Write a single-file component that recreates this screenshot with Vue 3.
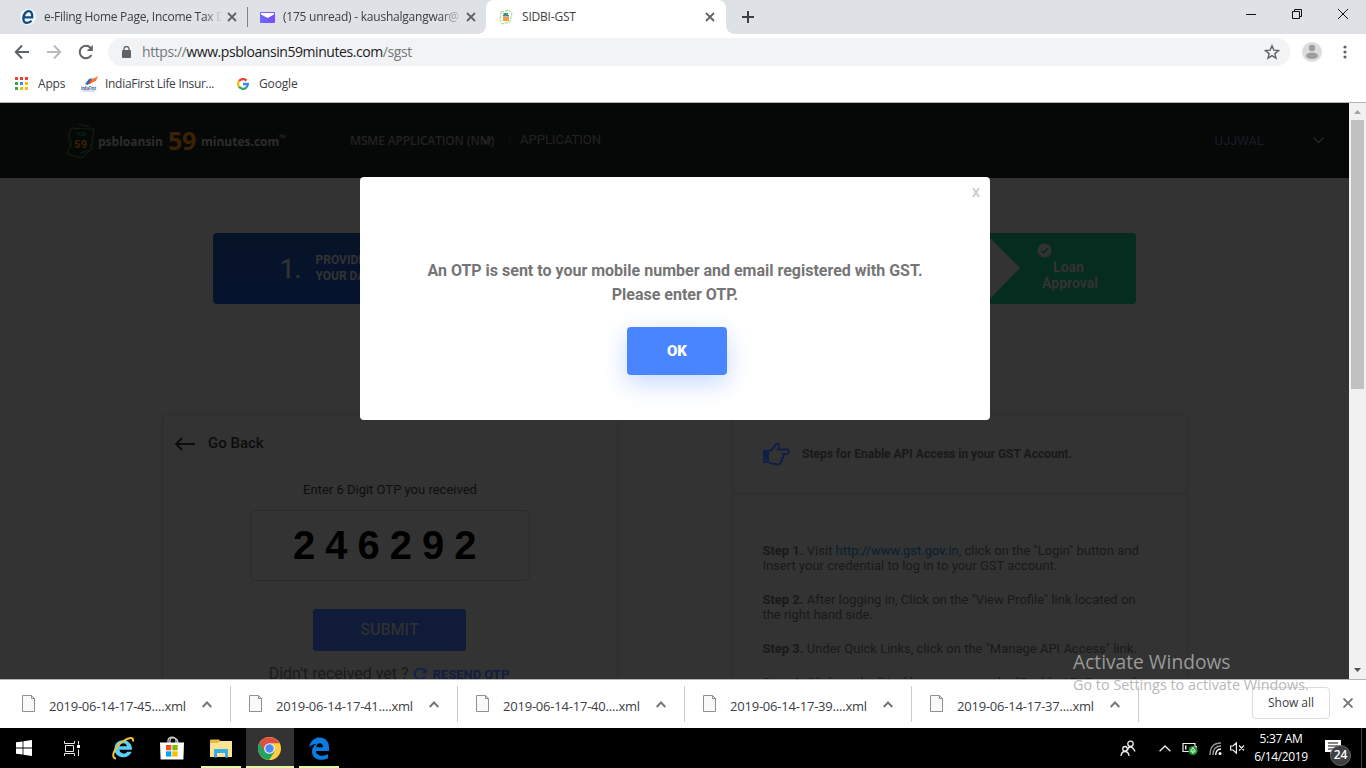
<script setup>
const downloads = [
  '2019-06-14-17-45....xml',
  '2019-06-14-17-41....xml',
  '2019-06-14-17-40....xml',
  '2019-06-14-17-39....xml',
  '2019-06-14-17-37....xml',
]
const appDots = ['#ea4335', '#ea4335', '#ea4335', '#34a853', '#4285f4', '#fbbc05', '#34a853', '#fbbc05', '#fbbc05']
</script>

<template>
  <div class="screen">
    <!-- Tab strip -->
    <div class="tabs">
      <div class="tab first">
        <svg class="fav" width="16" height="16" viewBox="0 0 16 16"><circle cx="8" cy="8" r="8" fill="#f4f7fa" /><path d="M3.300 8.400H12.200C12.600 1.500 8.600 1.200 6.200 3.200 2.400 6.400 2.200 13.800 7 13.800c2 0 3.400-.8 4.600-2" fill="none" stroke="#0b4f86" stroke-width="2.300" /></svg>
        <span class="title t1">e-Filing Home Page, Income Tax D</span>
        <svg class="x" width="10" height="10" viewBox="0 0 10 10"><path d="M1 1l8 8M9 1L1 9" /></svg>
      </div>
      <div class="tab second">
        <svg class="fav mail" width="15" height="11" viewBox="0 0 15 11"><defs><linearGradient id="mg"><stop offset="0" stop-color="#6b6bff" /><stop offset="1" stop-color="#7a4dff" /></linearGradient></defs><rect width="15" height="11" rx="1" fill="url(#mg)" /><path d="M1 1h13v1.500L7.500 6 1 2.500z" fill="#fff" /></svg>
        <span class="title t2">(175 unread) - kaushalgangwar@</span>
        <svg class="x" width="10" height="10" viewBox="0 0 10 10"><path d="M1 1l8 8M9 1L1 9" /></svg>
      </div>
      <div class="tab active">
        <svg class="fav" width="16" height="16" viewBox="0 0 16 16"><path d="M3 3l8-2 3 3-2 9-8 2-2-4z" fill="#f6faf2" stroke="#a5cf8c" stroke-dasharray="3 1" /><path d="M5.500 4h4.500v2H5.500z" fill="#3da05c" /><path d="M5 6h6v1.500H5z" fill="#5577c8" /><path d="M5 8h6v4H5z" fill="#f5a13a" /></svg>
        <span class="title t3">SIDBI-GST</span>
        <svg class="x" width="10" height="10" viewBox="0 0 10 10"><path d="M1 1l8 8M9 1L1 9" /></svg>
      </div>
      <svg class="plus" width="12" height="12" viewBox="0 0 12 12"><path d="M6 0v12M0 6h12" stroke="#3c4043" stroke-width="2" /></svg>
      <div class="winctl">
        <svg width="10" height="10" viewBox="0 0 10 10"><path d="M0 5.500h10" /></svg>
        <svg width="10" height="10" viewBox="0 0 10 10"><path d="M.5 2.500h7v7h-7zM2.500 2.500v-2h7v7h-2" /></svg>
        <svg width="10" height="10" viewBox="0 0 10 10"><path d="M0 0l10 10M10 0L0 10" /></svg>
      </div>
    </div>

    <!-- Address bar -->
    <div class="toolbar">
      <svg class="nav" width="16" height="16" viewBox="0 0 16 16"><path d="M15 8H2.500M8 1.500L1.800 8 8 14.500" stroke="#5f6368" /></svg>
      <svg class="nav" width="16" height="16" viewBox="0 0 16 16"><path d="M1 8h12.500M8 1.500L14.200 8 8 14.500" stroke="#b8babd" /></svg>
      <svg class="nav" width="16" height="16" viewBox="0 0 16 16"><path d="M13.400 11A6.200 6.200 0 1 1 12.500 3.800L14 5.300" stroke="#5f6368" /><path d="M14.800 1v6h-6z" fill="#5f6368" stroke="none" /></svg>
      <div class="omni">
        <svg width="9" height="12" viewBox="0 0 9 12"><rect y="4" width="9" height="8" rx="1" fill="#5f6368" /><path d="M2 5V3a2.500 2.500 0 0 1 5 0v2" fill="none" stroke="#5f6368" stroke-width="1.300" /></svg>
        <span class="url"><i>https://</i>www.psbloansin59minutes.com<i>/sgst</i></span>
        <svg class="star" width="16" height="16" viewBox="0 0 16 16"><path d="M8 1.700l1.800 4.400 4.700.4-3.600 3.100 1.100 4.600L8 11.700l-4 2.500 1.100-4.600L1.500 6.500l4.700-.4z" fill="none" stroke="#5f6368" stroke-width="1.400" /></svg>
      </div>
      <svg class="user" width="20" height="20" viewBox="0 0 20 20"><circle cx="10" cy="10" r="10" fill="#dcdcdc" /><circle cx="10" cy="6" r="3.200" fill="#9e9e9e" /><ellipse cx="10" cy="13.700" rx="6" ry="3.200" fill="#9e9e9e" /></svg>
      <svg class="menu" width="4" height="14" viewBox="0 0 4 14"><circle cx="2" cy="2" r="1.600" /><circle cx="2" cy="7" r="1.600" /><circle cx="2" cy="12" r="1.600" /></svg>
    </div>

    <div class="bookmarks">
      <div class="grid9"><b v-for="(c, i) in appDots" :key="i" :style="{ background: c }"></b></div>
      <span class="b1">Apps</span>
      <svg class="india" width="17" height="16" viewBox="0 0 17 16"><path d="M4 8l4-5 3-1-4 7z" fill="#1a73c4" /><path d="M6 8l5-5 2-1-4 6z" fill="#d92f3a" /><path d="M8 8l4-5 5-3-2 5z" fill="#f47b29" /><text x="0" y="13.500" font-size="5.500" font-weight="bold" textLength="15" lengthAdjust="spacingAndGlyphs" fill="#1d4e86">IndiaFirst</text><path d="M1 15h13" stroke="#9db4cf" stroke-width=".8" /></svg>
      <span class="b2">IndiaFirst Life Insur...</span>
      <svg class="goog" width="12" height="12" viewBox="0 0 12 12" fill="none" stroke-width="2.300"><path d="M2 3.200A4.850 4.850 0 0 1 9.500 2.600" stroke="#ea4335" /><path d="M2 8.700A4.850 4.850 0 0 1 2 3.200" stroke="#fbbc05" /><path d="M9.300 9.600A4.850 4.850 0 0 1 2 8.700" stroke="#34a853" /><path d="M6 6h4.850A4.850 4.850 0 0 1 9.200 9.600" stroke="#4285f4" /></svg>
      <span class="b3">Google</span>
    </div>

    <!-- Web page -->
    <div class="viewport">
      <div class="page">
        <header class="site">
          <svg class="logo" width="30" height="36" viewBox="0 0 30 36"><path d="M4 5l9 1M12 1l12 3M6 5l17 1 5 0-3 20-9 9-15-4 4-10M5 5L3 14 6 22" fill="none" stroke="#111d0e" stroke-width="1.200" /><path d="M1 8l2 7-1 5 3 3M26 15l2 3-4 4 3 3-4 4" fill="none" stroke="#1a1d0b" stroke-dasharray="2 1.500" /><text x="11" y="13" font-size="5" font-weight="bold" fill="#06260f">PSB</text><text x="8" y="25" font-size="11" font-weight="bold" textLength="13" fill="#3b2204">59</text><path d="M14 30l7-2" stroke="#06200f" stroke-width="1.500" /></svg>
          <span class="brand">psbloansin</span><span class="b59">59</span><span class="brand m">minutes.com</span><span class="tm">™</span>
          <div class="msme"><span>MSME APPLICATION (NM)</span><svg width="12" height="7" viewBox="0 0 12 7"><path d="M1 1l5 5 5-5" /></svg></div>
          <span class="app">APPLICATION</span>
          <span class="name">UJJWAL</span>
          <svg class="chev" width="11" height="7" viewBox="0 0 11 7"><path d="M.5.5l5 5 5-5" /></svg>
        </header>

        <div class="steps">
          <div class="one"><span class="num">1.</span><span class="lbl">PROVIDE<br />YOUR DATA</span></div>
          <div class="last">
            <svg class="badge" width="15" height="15" viewBox="0 0 15 15"><circle cx="7.500" cy="7.500" r="6.500" fill="#333" stroke="#333" stroke-width="1.500" stroke-dasharray="2 1" /><path d="M4.300 7.500l2.300 2.300 4.200-4.400" fill="none" stroke="#062b1f" stroke-width="1.800" /></svg>
            <span class="la">Loan</span><span>Approval</span>
          </div>
        </div>

        <div class="cards">
          <section class="card otp">
            <div class="back"><svg width="20" height="14" viewBox="0 0 20 14"><path d="M20 7H1.500M7 1L1 7l6 6" fill="none" stroke="#0c0c0c" stroke-width="1.900" /></svg>Go Back</div>
            <div class="prompt">Enter 6 Digit OTP you received</div>
            <div class="digits">246292</div>
            <div class="submit">SUBMIT</div>
            <div class="resend"><span>Didn't received yet ?</span><svg width="14" height="14" viewBox="0 0 14 14"><path d="M11.900 9.300A5.400 5.400 0 1 1 11 3.200L12 4.200" fill="none" stroke="#13234b" stroke-width="2" /><path d="M13.800.8v5.400H8.400z" fill="#13234b" /></svg><b>RESEND OTP</b></div>
          </section>
          <section class="card info">
            <div class="ihead">
              <svg width="28" height="24" viewBox="0 0 28 24"><path d="M1 8h6v13H1z" fill="#111f48" /><circle cx="3.800" cy="18.500" r="1" fill="#333" /><path d="M7 8.500C10 8.500 12 5.500 13 3.500 14 1.300 16.500 1 17 3c.4 1.500-.8 3.200-1.200 4.500H25c2.600.4 2.600 4 0 4.500h-4c1.300 1.600.8 3.500-1 4 .7 1.500.3 3-1.200 3.500.3 2-.7 3-2.800 3-3.500 0-6-1.500-9-1.600" fill="none" stroke="#111f48" stroke-width="1.900" /></svg>
              <b>Steps for Enable API Access in your GST Account.</b>
            </div>
            <div class="ibody">
              <p><b>Step 1.</b> Visit <a>http://www.gst.gov.in</a>, click on the "Login" button and<br />Insert your credential to log in to your GST account.</p>
              <p><b>Step 2.</b> After logging in, Click on the "View Profile" link located on<br />the right hand side.</p>
              <p><b>Step 3.</b> Under Quick Links, click on the "Manage API Access" link.</p>
              <p><b>Step 4.</b> Click on the "Yes" button next to the "Enable API Request"</p>
            </div>
          </section>
        </div>

        <div class="modal">
          <span class="close">X</span>
          <p>An OTP is sent to your mobile number and email registered with GST.<br />Please enter OTP.</p>
          <div class="ok">OK</div>
        </div>
      </div>
      <div class="scroll">
        <svg width="7" height="4" viewBox="0 0 7 4"><path d="M0 4L3.500 0 7 4z" fill="#a3a3a3" /></svg>
        <div class="thumb"></div>
        <svg width="7" height="4" viewBox="0 0 7 4"><path d="M0 0h7L3.500 4z" fill="#505050" /></svg>
      </div>
    </div>

    <!-- Downloads shelf -->
    <div class="shelf">
      <div v-for="d in downloads" :key="d" class="dl">
        <svg width="13" height="17" viewBox="0 0 13 17"><path d="M.5.5h9l3 3v13H.5z" fill="#f8f9f9" stroke="#909090" /><path d="M9.500.5v3h3" fill="none" stroke="#909090" /></svg>
        <span>{{ d }}</span>
        <svg class="up" width="10" height="7" viewBox="0 0 10 7"><path d="M.7 6L5 1.500 9.300 6" fill="none" stroke="#757575" stroke-width="1.900" /></svg>
      </div>
      <div class="showall">Show all</div>
      <svg class="sx" width="10" height="10" viewBox="0 0 10 10"><path d="M.5.5l9 9M9.500.5l-9 9" stroke="#757575" stroke-width="1.900" /></svg>
    </div>

    <!-- Taskbar -->
    <div class="taskbar">
      <div class="slot win"><svg width="16" height="16" viewBox="0 0 16 16"><path d="M0 2.300L6.600 1.400v6.200H0zM7.400 1.300L16 0v7.600H7.400zM0 8.400h6.600v6.200L0 13.700zM7.400 8.400H16V16l-8.600-1.300z" fill="#fff" /></svg></div>
      <div class="slot tv"><svg width="16" height="15" viewBox="0 0 16 15"><path d="M.5 0v2.500h10V0M.5 15v-2.500h10V15M1.500 4.500h8v6h-8zM14.500 0v3.500M14.500 8.500V15" fill="none" stroke="#e8e8e8" /><path d="M13 4h3v3h-3z" fill="#fff" /></svg></div>
      <div class="slot"><svg width="24" height="24" viewBox="0 0 24 24"><path d="M21 13.800H8.500c.3 4.400 6.500 4.800 7.500 1.900h4.600C18 23.500 3.500 23.500 3.500 12.500 3.500 1 21.500 1.500 21 13.800M8.600 10.300h7.300c-.5-4-6.800-3.800-7.300 0" fill="#5bd0f7" fill-rule="evenodd" /><path d="M5 22.500C-1.500 22 4 10.500 12.500 5c6-4 10.500-4.500 9.500.5" fill="none" stroke="#f2c230" stroke-width="2" /></svg></div>
      <div class="slot"><svg width="24" height="24" viewBox="0 0 24 24"><path d="M8 7V5q0-4 4-4t4 4v2M10 7V4q0-2 3-2 5 0 5 5" fill="none" stroke="#ddd" stroke-width="1.200" /><path d="M0 6.500h24l-.6 17H.6z" fill="#fff" /><path d="M6 9h5.300v5.300H6z" fill="#f25022" /><path d="M12.300 9h5.300v5.300h-5.300z" fill="#7fba00" /><path d="M6 15.300h5.300v5.300H6z" fill="#00a4ef" /><path d="M12.300 15.300h5.300v5.300h-5.300z" fill="#ffb900" /></svg></div>
      <div class="slot run"><svg width="22" height="19" viewBox="0 0 22 19"><path d="M0 1.500Q0 .5 1 .5h8l1.500 2H22V18H0z" fill="#e9b93f" /><path d="M0 4h8l2-2h12v16H0z" fill="#ffe394" /><path d="M4 18.500V11q0-1 1-1h12q1 0 1 1v7.500h-3V14H7v4.500z" fill="#35aee5" /></svg></div>
      <div class="slot run cur"><svg width="23" height="23" viewBox="0 0 24 24"><circle cx="12" cy="12" r="12" fill="#ffcd40" /><path d="M12 12L1.600 6A12 12 0 0 0 11.500 24l6-9z" fill="#1fa463" /><path d="M1.600 6A12 12 0 0 1 22.400 6.500H12L6.800 15z" fill="#dd5144" /><circle cx="12" cy="12" r="5.600" fill="#f1f1f1" /><circle cx="12" cy="12" r="4.400" fill="#4c8bf5" /></svg></div>
      <div class="slot run edge"><svg width="22" height="23" viewBox="0 0 22 23"><path d="M1 10C3 3 7 .5 11.500.5 18 .5 21 5 21 10.500V14H8c.2 5.500 8 5.800 12 3v4.200C12 25 4 22 4 14.500c0-4 2-6.500 5-7.800C5 7 2.500 8.500 1 10M8.200 10.300H15C15.200 4.500 8.500 5 8.200 10.300" fill="#0a7be0" fill-rule="evenodd" /></svg></div>
      <div class="tray">
        <svg class="people" width="16" height="17" viewBox="0 0 16 17" fill="none" stroke="#eee" stroke-width="1.300"><circle cx="10.500" cy="3.800" r="2.700" /><path d="M7.500 10.500Q8 7 10.500 7t4.500 4.500" /><circle cx="5" cy="8.800" r="2.300" /><path d="M1 16q.5-4.500 4-4.500T9 16" /></svg>
        <svg class="tup" width="12" height="7" viewBox="0 0 12 7"><path d="M.6 6.300L6 1l5.400 5.300" fill="none" stroke="#eee" stroke-width="1.300" /></svg>
        <svg class="bat" width="16" height="13" viewBox="0 0 16 13"><path d="M1 1.500h12v8H1zM14.300 4v3" fill="none" stroke="#eee" stroke-width="1.200" /><path d="M3 3.500h1.500v4H3z" fill="#eee" /><circle cx="11" cy="8.500" r="4.500" fill="#1c9a35" /><path d="M11 5.500l2.300 3.700L11 10.500 8.700 9.200zM11 8v3.500" fill="none" stroke="#eaffea" stroke-width=".9" /></svg>
        <svg class="wifi" width="13" height="13" viewBox="0 0 13 13"><path d="M1 13Q1 1 12 1M4 13Q4 4 12 4" fill="none" stroke="#999" stroke-width="1.300" /><path d="M6.700 13Q7 7 12 7" fill="none" stroke="#fff" stroke-width="1.300" /><circle cx="11" cy="11.500" r="1.500" fill="#fff" /></svg>
        <svg class="vol" width="15" height="12" viewBox="0 0 15 12"><path d="M.6 4H3l3.400-3.200v10.400L3 8H.6zM9 3.500l5 5M14 3.500l-5 5" fill="none" stroke="#eee" stroke-width="1.200" /></svg>
        <div class="clock">5:37 AM<br />6/14/2019</div>
        <div class="ac"><svg width="16" height="16" viewBox="0 0 16 16"><path d="M0 0h16v12h-7l-3.500 3.500V12H0z" fill="#fff" /><path d="M3 3h10M3 6h10M3 9h7" stroke="#111" stroke-width="1.100" /></svg><b>24</b></div>
        <i class="peek"></i>
      </div>
    </div>

    <div class="watermark"><div class="w1">Activate Windows</div><div class="w2">Go to Settings to activate Windows.</div></div>
  </div>
</template>

<style>
html, body { margin: 0; overflow: hidden; }
</style>
<style scoped>
* { box-sizing: border-box; }
svg { display: block; flex: none; }
span { white-space: nowrap; }
.screen { position: relative; width: 1366px; height: 768px; overflow: hidden; background: #fff; font: 12px/16px "Open Sans", "Noto Sans", sans-serif; color: #3c4043; }

.tabs { display: flex; height: 34px; background: #dee1e6; }
.tab { display: flex; align-items: center; height: 34px; }
.tab .x { margin-left: auto; margin-right: 15px; }
.x path { stroke: #5f6368; stroke-width: 1.8; }
.first { width: 248px; padding-left: 20px; background: linear-gradient(#808488, #808488) 247px 7px / 1px 20px no-repeat; }
.first .x { margin-right: 11px; }
.second { width: 238px; padding-left: 12px; }
.second .x { margin-right: 10px; }
.active { width: 240px; padding-left: 12px; background: #fff; border-radius: 8px 8px 0 0; position: relative; }
.active::before, .active::after { content: ""; position: absolute; bottom: 0; width: 8px; height: 8px; }
.active::before { left: -8px; background: radial-gradient(circle at 0 0, #dee1e6 7.5px, #fff 8px); }
.active::after { right: -8px; background: radial-gradient(circle at 100% 0, #dee1e6 7.5px, #fff 8px); }
.active .x { margin-right: 11px; }
.title { margin-left: 8px; overflow: hidden; }
.t1 { width: 178px; letter-spacing: -.27px; mask-image: linear-gradient(90deg, #000 160px, transparent 178px); }
.t2 { width: 178px; letter-spacing: -.23px; mask-image: linear-gradient(90deg, #000 158px, transparent 180px); }
.t3 { letter-spacing: -.2px; }
.plus { margin: 11px 0 0 16px; }
.winctl { display: flex; gap: 36px; margin: 9px 18px 0 auto; }
.winctl path { fill: none; stroke: #111; }

.toolbar { display: flex; align-items: center; height: 36px; }
.nav { margin-left: 14px; margin-right: 2px; }
.nav + .nav { margin-left: 14px; }
.nav path { fill: none; stroke-width: 2; }
.nav path + path { fill: #5f6368; }
.omni { display: flex; align-items: center; width: 1182px; height: 28px; margin-left: 12px; padding: 0 10px 0 14px; border-radius: 14px; background: #f1f3f4; }
.url { margin-left: 11px; font-size: 14px; color: #202124; letter-spacing: -.43px; }
.url i { font-style: normal; color: #74787c; }
.star { margin-left: auto; }
.user { margin-left: 12px; }
.menu { margin-left: 21px; fill: #5f6368; }

.bookmarks { display: flex; align-items: center; height: 33px; padding: 0 0 5px 15px; border-bottom: 1px solid #b6b4b6; }
.grid9 { display: grid; grid-template-columns: repeat(3, 3px); gap: 2px; }
.grid9 b { height: 3px; }
.b1 { margin-left: 10px; width: 43px; letter-spacing: -.2px; }
.b2 { margin-left: 7px; width: 132px; letter-spacing: -.3px; }
.b3 { margin-left: 10px; letter-spacing: -.15px; }
.india { font-family: "Open Sans", sans-serif; }

.viewport { display: flex; height: 576px; font-family: Roboto, sans-serif; }
.page { position: relative; width: 1349px; height: 576px; overflow: hidden; background: #333; }
.site { display: flex; align-items: center; height: 75px; padding-left: 66px; background: #060807; }
.brand { width: 66px; margin: 3px 0 0 2px; font: bold 12px/20px "Open Sans"; color: #2d2d2d; }
.b59 { width: 29px; margin: -2px 0 0 4px; font: bold 25px/30px "Open Sans"; color: #3b2204; letter-spacing: -.3px; }
.brand.m { width: 78px; margin-left: 4px; }
.tm { width: 9px; font: bold 9px/12px "Open Sans"; color: #2d2d2d; margin-top: -6px; }
.msme { display: flex; align-items: center; width: 160px; margin-left: 62px; border-right: 1px solid #0a0c0d; font: 600 12px/18px "Open Sans"; color: #222; }
.msme span { letter-spacing: -.15px; }
.msme svg { margin-left: -13px; }
.msme path, .chev path { fill: none; stroke: #242424; stroke-width: 1.4; }
.app { margin-left: 10px; margin-top: -2px; font-size: 13px; color: #222; }
.name { margin-left: auto; font-size: 13px; color: #1a1c28; }
.chev { margin-left: 49px; margin-right: 25px; }

.steps { display: flex; width: 923px; height: 71px; margin: 55px 0 0 213px; justify-content: space-between; }
.one { display: flex; align-items: center; width: 230px; padding-left: 67px; background: linear-gradient(#071326, #06132f); border-radius: 4px; color: #333; }
.num { font-size: 26px; -webkit-text-stroke: .4px #333; }
.lbl { margin: -2px 0 0 14px; font: bold 12px/16px Roboto; }
.last { display: flex; flex-direction: column; align-items: center; position: relative; width: 180px; background: #062b1f; border-radius: 4px; color: #333; padding: 26px 0 0 48px; font: bold 14px/16px Roboto; clip-path: polygon(0 0, 100% 0, 100% 100%, 29px 100%, 64px 35px, 29px 0); }
.la { margin-right: 3px; }
.badge { position: absolute; left: 81px; top: 10px; }

.cards { display: flex; gap: 114px; margin: 110px 0 0 162px; }
.card { width: 456px; height: 280px; border: 1px solid #2d2d2d; border-radius: 4px; }
.otp { display: flex; flex-direction: column; align-items: center; }
.back { align-self: flex-start; display: flex; align-items: center; gap: 13px; margin: 18px 0 0 12px; font: 500 15px/20px Roboto; color: #0c0c0c; }
.back svg { margin-top: 1px; }
.prompt { margin-top: 27px; font-size: 13px; line-height: 20px; color: #0e0e0e; }
.digits { width: 280px; height: 71px; margin-top: 10px; padding-left: 42px; border: 1px solid #2b2b2b; border-radius: 5px; font: bold 40px/69px "Liberation Sans", sans-serif; letter-spacing: 10px; color: #000; }
.submit { width: 153px; height: 42px; margin: 28px 1px 0 0; border-radius: 3px; background: #0f1b38; color: #2e3033; text-align: center; font: 500 16px/41px Roboto; }
.resend { display: flex; align-items: center; margin: 12px 2px 0 0; line-height: 20px; font-size: 16px; color: #1a1a1a; white-space: nowrap; }
.resend svg { margin: 0 6px 0 4px; }
.resend b { font-size: 13px; color: #111d3f; margin-top: 2px; }
.ihead { display: flex; align-items: center; height: 79px; padding-left: 29px; border-bottom: 1px solid #2d2d2d; font-size: 12px; color: #191919; }
.ihead svg { margin-right: 12px; }
.ibody { padding: 49px 0 0 29.4px; font-size: 13px; line-height: 15px; color: #191919; white-space: nowrap; }
.ibody p { margin: 0 0 19px; }
.ibody a { color: #06202f; }

.modal { position: absolute; left: 360px; top: 74px; width: 630px; height: 243px; border-radius: 4px; background: #fff; text-align: center; color: #757575; }
.close { position: absolute; right: 10px; top: 7px; font: bold 12.5px/18px Roboto; color: #ccc; }
.modal p { margin: 82px 0 0; font: bold 16px/24px Roboto; }
.ok { width: 100px; height: 48px; margin: 20px 0 0 267px; border-radius: 4px; background: #4885ff; color: #fff; font: 900 15px/48px Roboto; box-shadow: 0 8px 24px rgba(72, 133, 255, .32); }
.scroll { display: flex; flex-direction: column; align-items: center; width: 17px; background: #f1f1f1; padding: 7px 0; }
.thumb { width: 13px; height: 269px; margin: 6px 0 auto; background: #c1c1c1; }

.shelf { display: flex; height: 49px; border-top: 1px solid #b4b4b4; background: #fff; }
.dl { display: flex; width: 227px; height: 36px; margin-top: 6px; padding: 9px 0 0 18px; border-right: 1px solid #ccc; }
.dl:first-child { width: 231px; padding-left: 22px; }
.dl span { width: 137px; margin: 3px 16px 0 14px; font-size: 13px; letter-spacing: -.21px; }
.dl .up { margin-top: 6px; }
.showall { width: 78px; height: 32px; margin: 7px 0 0 113px; border: 1px solid #dadce0; border-radius: 4px; text-align: center; line-height: 30px; font-weight: 500; letter-spacing: -.05px; }
.sx { margin: 18px 0 0 13px; }

.taskbar { display: flex; height: 40px; background: #000; }
.slot { display: flex; align-items: center; justify-content: center; width: 49px; height: 40px; position: relative; }
.win { padding-right: 1px; }
.tv { padding-right: 3px; }
.run::after { content: ""; position: absolute; left: 5px; right: 4px; bottom: 0; height: 2px; background: #e3f8a0; }
.cur { background: #333; width: 48px; margin-left: 1px; }
.cur svg { margin-right: 1px; }
.cur::after { left: 0; right: 0; }
.tray { display: flex; align-items: center; margin-left: auto; color: #fff; }
.tup { margin-left: 23px; }
.bat { margin-left: 11px; }
.wifi { margin-left: 11px; }
.vol { margin-left: 8px; }
.clock { width: 72px; margin-right: 3px; text-align: center; line-height: 18px; letter-spacing: -.35px; }
.ac { position: relative; width: 36px; height: 16px; margin: -1px 0 0 5px; }
.ac b { position: absolute; left: 5px; top: 5px; width: 21px; height: 21px; border-radius: 50%; background: #3d3f42; border: 1px solid #666; font: 600 12px/18px "Open Sans"; text-align: center; }
.peek { width: 5px; height: 40px; border-left: 1px solid #444; }

.watermark { position: absolute; left: 1073px; top: 650px; white-space: nowrap; color: rgba(190, 190, 190, .75); }
.w1 { font-size: 19.2px; line-height: 24px; }
.w2 { font-size: 14.4px; line-height: 22px; color: #b8b8b8; }
</style>
